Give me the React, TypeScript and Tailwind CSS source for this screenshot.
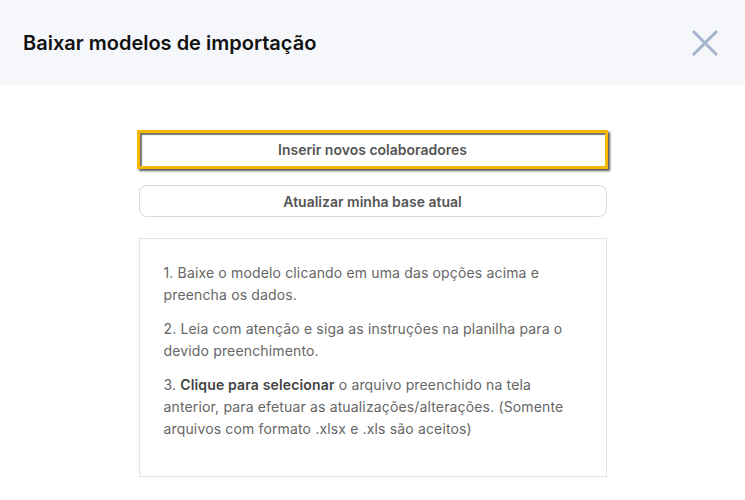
import React from 'react';

const steps = [
  { n: '1.', bold: '', text: 'Baixe o modelo clicando em uma das opções acima e preencha os dados.' },
  { n: '2.', bold: '', text: 'Leia com atenção e siga as instruções na planilha para o devido preenchimento.' },
  {
    n: '3.',
    bold: 'Clique para selecionar',
    text: 'o arquivo preenchido na tela anterior, para efetuar as atualizações/alterações. (Somente arquivos com formato .xlsx e .xls são aceitos)',
  },
];

export default function App() {
  return (
    <div className="w-[745px] h-[500px] bg-white font-['Inter',sans-serif] overflow-hidden">
      {/* Header */}
      <div className="h-[85px] bg-[#f6f7fb] flex items-center justify-between pl-[23px] pr-[27px]">
        <h1 className="text-[20px] font-semibold text-[#111111]">Baixar modelos de importação</h1>
        <button className="w-[26px] h-[26px] flex items-center justify-center">
          <svg width="26" height="26" viewBox="0 0 26 26" fill="none">
            <path d="M2 2L24 24M24 2L2 24" stroke="#a5b4cc" strokeWidth="3" strokeLinecap="square" />
          </svg>
        </button>
      </div>

      <div className="pt-[45px] flex flex-col items-center">
        <div className="w-[471px] border-[3px] border-[#f5b700] shadow-[2px_2px_2px_rgba(0,0,0,0.65)]">
          <button className="w-full h-[33px] bg-white shadow-[inset_2px_2px_1px_rgba(60,60,60,0.7)] text-[14px] font-semibold text-[#555555]">
            Inserir novos colaboradores
          </button>
        </div>

        <button className="mt-[16px] w-[468px] h-[32px] rounded-lg border border-[#d9d9d9] bg-white text-[14px] font-semibold text-[#555555]">
          Atualizar minha base atual
        </button>

        <div className="mt-[21px] w-[468px] h-[239px] border border-[#e4e4e4] px-[24px] pt-[23px] flex flex-col gap-[12px]">
          {steps.map((s) => (
            <p key={s.n} className="text-[14px] leading-[22px] tracking-[0.15px] text-[#666666]">
              {s.bold ? (
                <>
                  {s.n + ' '}
                  <span className="font-semibold text-[#444444]">{s.bold}</span>
                  {' ' + s.text}
                </>
              ) : (
                s.n + ' ' + s.text
              )}
            </p>
          ))}
        </div>
      </div>
    </div>
  );
}
